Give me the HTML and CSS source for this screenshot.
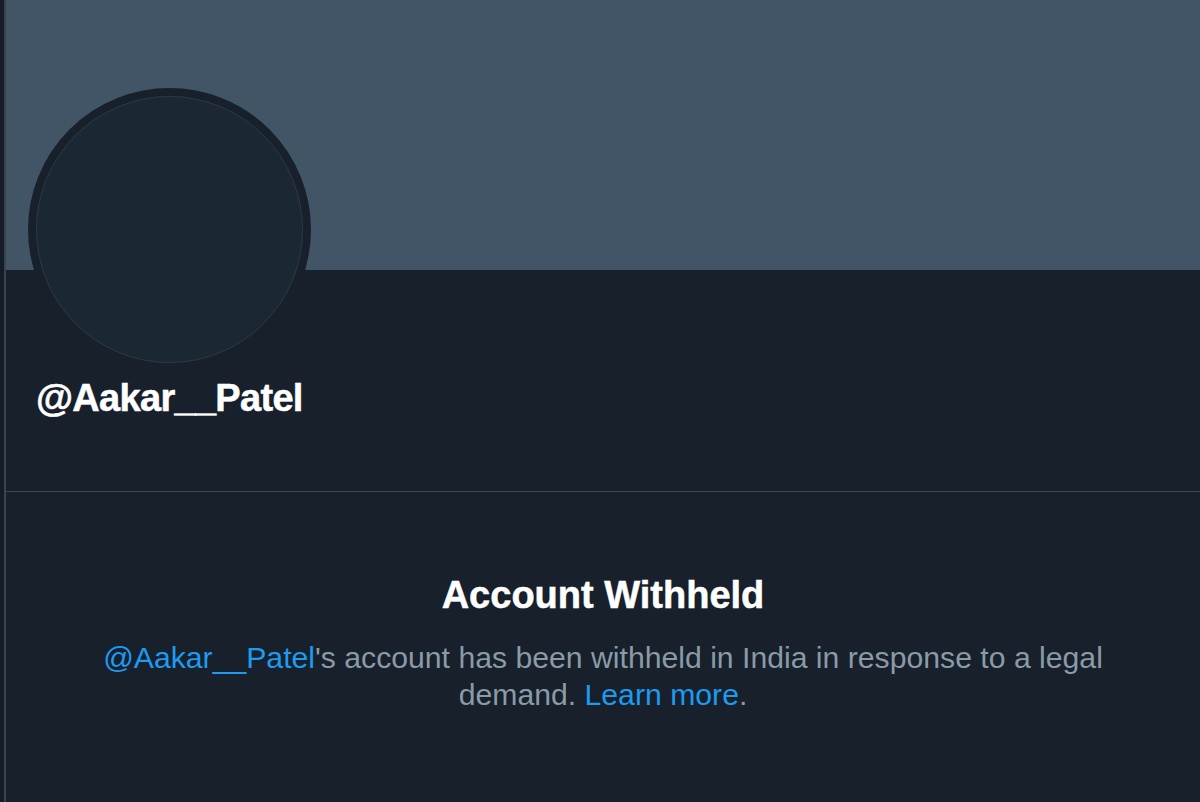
FILE: index.html
```html
<!DOCTYPE html>
<html lang="en">
<head>
<meta charset="utf-8">
<title>@Aakar__Patel</title>
<link rel="stylesheet" href="styles.css">
</head>
<body>
<div class="page">
  <main class="column">
    <div class="banner"></div>
    <section class="profile">
      <div class="avatar"><div class="avatar-inner"></div></div>
      <h1 class="handle">@Aakar__Patel</h1>
    </section>
    <section class="withheld">
      <h2 class="title">Account Withheld</h2>
      <p class="message"><a class="link" href="#">@Aakar__Patel</a>'s account has been withheld in India in response to a legal demand. <a class="link" href="#">Learn more</a>.</p>
    </section>
  </main>
</div>
</body>
</html>
```

FILE: styles.css
```css
html, body {
  margin: 0;
  padding: 0;
  height: 100%;
}

body {
  background: #16202b;
  font-family: "Liberation Sans", Arial, sans-serif;
  overflow: hidden;
}

.page {
  display: flex;
  min-height: 100%;
  padding-left: 4px;
  background: #151e28;
}

.column {
  flex: 1;
  border-left: 2px solid #38444f;
  background: #17202b;
  min-height: 802px;
}

.banner {
  height: 270px;
  background: #425566;
}

.profile {
  padding: 0 0 69px 22px;
  border-bottom: 1px solid #3a4754;
}

.avatar {
  width: 267px;
  height: 267px;
  margin-top: -182px;
  border: 8px solid #17202b;
  border-radius: 50%;
  background: #1b2733;
  display: flex;
  align-items: center;
  justify-content: center;
}

.avatar-inner {
  width: 265px;
  height: 265px;
  border-radius: 50%;
  border: 1px solid #2b3946;
  box-sizing: content-box;
}

.handle {
  margin: 5px 0 0 8px;
  font-size: 38px;
  line-height: 1.2;
  font-weight: 700;
  letter-spacing: -0.7px;
  color: #ffffff;
  -webkit-text-stroke: 0.5px #ffffff;
}

.withheld {
  padding-top: 80px;
  text-align: center;
}

.title {
  margin: 0;
  font-size: 38px;
  line-height: 46px;
  font-weight: 700;
  color: #ffffff;
  -webkit-text-stroke: 0.5px #ffffff;
}

.message {
  margin: 21px auto 0;
  max-width: 1010px;
  font-size: 30.2px;
  line-height: 37px;
  color: #8a9aa7;
}

.link {
  color: #1d9bf0;
  text-decoration: none;
}
```
